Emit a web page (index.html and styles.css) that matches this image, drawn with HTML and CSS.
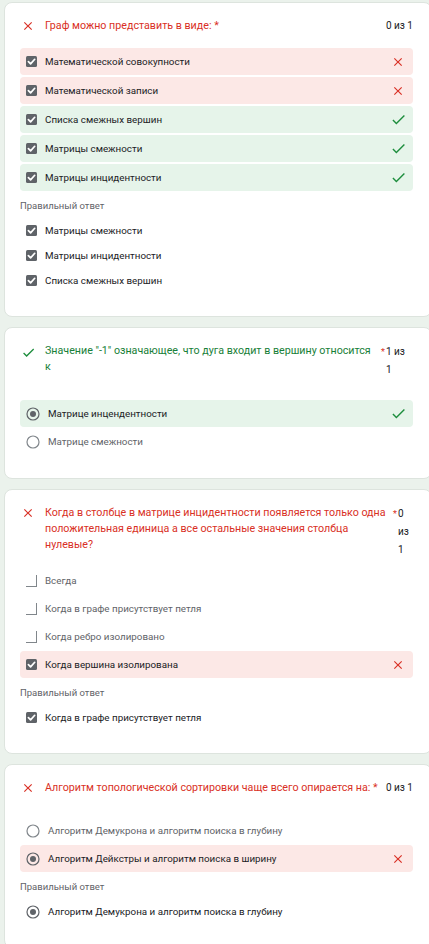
FILE: index.html
```html
<!DOCTYPE html>
<html lang="ru">
<head>
<meta charset="utf-8">
<title>Результаты теста</title>
<link rel="stylesheet" href="styles.css">
</head>
<body>
<div class="page">

  <section class="card">
    <div class="q-head">
      <svg class="q-icon q-icon--wrong" viewBox="0 0 24 24"><path d="M19 6.41L17.59 5 12 10.59 6.41 5 5 6.41 10.59 12 5 17.59 6.41 19 12 13.41 17.59 19 19 17.59 13.41 12z"/></svg>
      <div class="q-title q-title--wrong">Граф можно представить в виде: *</div>
      <div class="q-score">0 из 1</div>
    </div>
    <div class="opts opts--loose">
      <div class="opt opt--wrong">
        <svg class="cb" viewBox="0 0 11 11"><rect width="11" height="11" rx="1.5"/><polyline points="2.4,5.7 4.6,7.9 8.7,3.3"/></svg>
        <span class="opt-label">Математической совокупности</span>
        <svg class="mark mark--x" viewBox="0 0 24 24"><path d="M19 6.41L17.59 5 12 10.59 6.41 5 5 6.41 10.59 12 5 17.59 6.41 19 12 13.41 17.59 19 19 17.59 13.41 12z"/></svg>
      </div>
      <div class="opt opt--wrong">
        <svg class="cb" viewBox="0 0 11 11"><rect width="11" height="11" rx="1.5"/><polyline points="2.4,5.7 4.6,7.9 8.7,3.3"/></svg>
        <span class="opt-label">Математической записи</span>
        <svg class="mark mark--x" viewBox="0 0 24 24"><path d="M19 6.41L17.59 5 12 10.59 6.41 5 5 6.41 10.59 12 5 17.59 6.41 19 12 13.41 17.59 19 19 17.59 13.41 12z"/></svg>
      </div>
      <div class="opt opt--right">
        <svg class="cb" viewBox="0 0 11 11"><rect width="11" height="11" rx="1.5"/><polyline points="2.4,5.7 4.6,7.9 8.7,3.3"/></svg>
        <span class="opt-label">Списка смежных вершин</span>
        <svg class="mark mark--ok" viewBox="0 0 24 24"><path d="M9 16.17L4.83 12l-1.42 1.41L9 19 21 7l-1.41-1.41z"/></svg>
      </div>
      <div class="opt opt--right">
        <svg class="cb" viewBox="0 0 11 11"><rect width="11" height="11" rx="1.5"/><polyline points="2.4,5.7 4.6,7.9 8.7,3.3"/></svg>
        <span class="opt-label">Матрицы смежности</span>
        <svg class="mark mark--ok" viewBox="0 0 24 24"><path d="M9 16.17L4.83 12l-1.42 1.41L9 19 21 7l-1.41-1.41z"/></svg>
      </div>
      <div class="opt opt--right">
        <svg class="cb" viewBox="0 0 11 11"><rect width="11" height="11" rx="1.5"/><polyline points="2.4,5.7 4.6,7.9 8.7,3.3"/></svg>
        <span class="opt-label">Матрицы инцидентности</span>
        <svg class="mark mark--ok" viewBox="0 0 24 24"><path d="M9 16.17L4.83 12l-1.42 1.41L9 19 21 7l-1.41-1.41z"/></svg>
      </div>
    </div>
    <div class="correct-label">Правильный ответ</div>
    <div class="answers">
      <div class="ans">
        <svg class="cb" viewBox="0 0 11 11"><rect width="11" height="11" rx="1.5"/><polyline points="2.4,5.7 4.6,7.9 8.7,3.3"/></svg>
        <span>Матрицы смежности</span>
      </div>
      <div class="ans">
        <svg class="cb" viewBox="0 0 11 11"><rect width="11" height="11" rx="1.5"/><polyline points="2.4,5.7 4.6,7.9 8.7,3.3"/></svg>
        <span>Матрицы инцидентности</span>
      </div>
      <div class="ans">
        <svg class="cb" viewBox="0 0 11 11"><rect width="11" height="11" rx="1.5"/><polyline points="2.4,5.7 4.6,7.9 8.7,3.3"/></svg>
        <span>Списка смежных вершин</span>
      </div>
    </div>
  </section>

  <section class="card">
    <div class="q-head">
      <svg class="q-icon q-icon--ok" viewBox="0 0 24 24"><path d="M9 16.17L4.83 12l-1.42 1.41L9 19 21 7l-1.41-1.41z"/></svg>
      <div class="q-title q-title--ok">Значение "-1" означающее, что дуга входит в вершину относится к</div>
      <div class="q-score q-score--mid"><span class="req">*</span><span class="score-val">1 из 1</span></div>
    </div>
    <div class="opts opts--radio">
      <div class="opt opt--right">
        <svg class="rb" viewBox="0 0 14 14"><circle cx="7" cy="7" r="6" class="rb-ring"/><circle cx="7" cy="7" r="3" class="rb-dot"/></svg>
        <span class="opt-label">Матрице инцендентности</span>
        <svg class="mark mark--ok" viewBox="0 0 24 24"><path d="M9 16.17L4.83 12l-1.42 1.41L9 19 21 7l-1.41-1.41z"/></svg>
      </div>
      <div class="opt">
        <svg class="rb rb--off" viewBox="0 0 14 14"><circle cx="7" cy="7" r="6" class="rb-ring"/></svg>
        <span class="opt-label">Матрице смежности</span>
      </div>
    </div>
  </section>

  <section class="card">
    <div class="q-head">
      <svg class="q-icon q-icon--wrong" viewBox="0 0 24 24"><path d="M19 6.41L17.59 5 12 10.59 6.41 5 5 6.41 10.59 12 5 17.59 6.41 19 12 13.41 17.59 19 19 17.59 13.41 12z"/></svg>
      <div class="q-title q-title--wrong">Когда в столбце в матрице инцидентности появляется только одна положительная единица а все остальные значения столбца нулевые?</div>
      <div class="q-score q-score--narrow"><span class="req">*</span><span class="score-val">0 из 1</span></div>
    </div>
    <div class="opts">
      <div class="opt">
        <span class="cb-off"></span>
        <span class="opt-label">Всегда</span>
      </div>
      <div class="opt">
        <span class="cb-off"></span>
        <span class="opt-label">Когда в графе присутствует петля</span>
      </div>
      <div class="opt">
        <span class="cb-off"></span>
        <span class="opt-label">Когда ребро изолировано</span>
      </div>
      <div class="opt opt--wrong">
        <svg class="cb" viewBox="0 0 11 11"><rect width="11" height="11" rx="1.5"/><polyline points="2.4,5.7 4.6,7.9 8.7,3.3"/></svg>
        <span class="opt-label">Когда вершина изолирована</span>
        <svg class="mark mark--x" viewBox="0 0 24 24"><path d="M19 6.41L17.59 5 12 10.59 6.41 5 5 6.41 10.59 12 5 17.59 6.41 19 12 13.41 17.59 19 19 17.59 13.41 12z"/></svg>
      </div>
    </div>
    <div class="correct-label">Правильный ответ</div>
    <div class="answers">
      <div class="ans">
        <svg class="cb" viewBox="0 0 11 11"><rect width="11" height="11" rx="1.5"/><polyline points="2.4,5.7 4.6,7.9 8.7,3.3"/></svg>
        <span>Когда в графе присутствует петля</span>
      </div>
    </div>
  </section>

  <section class="card">
    <div class="q-head">
      <svg class="q-icon q-icon--wrong" viewBox="0 0 24 24"><path d="M19 6.41L17.59 5 12 10.59 6.41 5 5 6.41 10.59 12 5 17.59 6.41 19 12 13.41 17.59 19 19 17.59 13.41 12z"/></svg>
      <div class="q-title q-title--wrong">Алгоритм топологической сортировки чаще всего опирается на: *</div>
      <div class="q-score q-score--tight">0 из 1</div>
    </div>
    <div class="opts opts--radio">
      <div class="opt">
        <svg class="rb rb--off" viewBox="0 0 14 14"><circle cx="7" cy="7" r="6" class="rb-ring"/></svg>
        <span class="opt-label">Алгоритм Демукрона и алгоритм поиска в глубину</span>
      </div>
      <div class="opt opt--wrong">
        <svg class="rb" viewBox="0 0 14 14"><circle cx="7" cy="7" r="6" class="rb-ring"/><circle cx="7" cy="7" r="3" class="rb-dot"/></svg>
        <span class="opt-label">Алгоритм Дейкстры и алгоритм поиска в ширину</span>
        <svg class="mark mark--x" viewBox="0 0 24 24"><path d="M19 6.41L17.59 5 12 10.59 6.41 5 5 6.41 10.59 12 5 17.59 6.41 19 12 13.41 17.59 19 19 17.59 13.41 12z"/></svg>
      </div>
    </div>
    <div class="correct-label">Правильный ответ</div>
    <div class="answers">
      <div class="ans">
        <svg class="rb" viewBox="0 0 14 14"><circle cx="7" cy="7" r="6" class="rb-ring"/><circle cx="7" cy="7" r="3" class="rb-dot"/></svg>
        <span>Алгоритм Демукрона и алгоритм поиска в глубину</span>
      </div>
    </div>
  </section>

</div>
</body>
</html>
```
FILE: styles.css
```css
* { box-sizing: border-box; }

body {
  margin: 0;
  background: #ebf2ec;
  font-family: Roboto, "Noto Sans", Arial, sans-serif;
  color: #202124;
  overflow: hidden;
}

.page {
  display: flex;
  flex-direction: column;
  gap: 10px;
  padding: 2px 0 0 4px;
}

.card {
  background: #fff;
  border: 1px solid #dde4de;
  border-radius: 8px;
  margin-right: -3px;
  padding: 15px 18px 23px 15px;
}

.q-head {
  display: flex;
  align-items: flex-start;
}

.q-icon {
  flex: none;
  width: 14px;
  height: 14px;
  margin: 1px 10px 0 1px;
}
.q-icon--wrong { fill: #d93025; }
.q-icon--ok { fill: #1e8e3e; width: 15px; height: 15px; margin: 2px 9px 0 1px; }

.q-title {
  flex: 1;
  font-size: 10.7px;
  line-height: 16px;
}
.q-title--wrong { color: #d93025; }
.q-title--ok { color: #188038; }

.q-score {
  flex: none;
  margin-left: 10px;
  font-size: 10px;
  line-height: 16px;
  color: #202124;
  white-space: nowrap;
}

.q-score--tight { margin-left: 5px; }

.q-score--mid,
.q-score--narrow {
  display: flex;
  white-space: normal;
  line-height: 18px;
}

.q-score--mid {
  margin-right: 8px;
}
.q-score--mid .score-val { width: 19px; }

.q-score--narrow {
  margin-left: 3px;
  margin-right: 8px;
  margin-bottom: -6px;
}
.q-score--narrow .score-val { width: 7px; }

.req {
  flex: none;
  color: #d93025;
  font-size: 9px;
  margin-right: 1px;
}

.opts {
  display: flex;
  flex-direction: column;
  gap: 1px;
  margin-top: 14px;
}
.opts--loose { gap: 2px; }
.opts--radio { margin-top: 21px; }

.opt {
  display: flex;
  align-items: center;
  gap: 8px;
  height: 27px;
  padding: 0 8px 0 6px;
  border-radius: 4px;
  font-size: 9.8px;
  color: #5f6368;
}
.opt--wrong { background: #fce8e6; color: #202124; }
.opt--right { background: #e6f4ea; color: #202124; }

.opt-label { flex: 1; }

.cb {
  flex: none;
  width: 11px;
  height: 11px;
}
.cb rect { fill: #5f6368; }
.cb polyline {
  fill: none;
  stroke: #fff;
  stroke-width: 1.7;
  stroke-linecap: round;
  stroke-linejoin: round;
}

.cb-off {
  flex: none;
  width: 11px;
  height: 12px;
  border-right: 1.5px solid #80868b;
  border-bottom: 1.5px solid #80868b;
}

.rb {
  flex: none;
  width: 14px;
  height: 14px;
}
.rb-ring { fill: none; stroke: #5f6368; stroke-width: 1.2; }
.rb-dot { fill: #5f6368; }
.rb--off .rb-ring { stroke: #80868b; }

.mark {
  flex: none;
  width: 14px;
  height: 14px;
}
.mark--x { fill: #d93025; }
.mark--ok { fill: #1e8e3e; width: 17px; height: 17px; margin-right: -2px; }

.correct-label {
  margin-top: 8px;
  font-size: 9.5px;
  line-height: 14px;
  color: #5f6368;
}

.answers {
  display: flex;
  flex-direction: column;
  margin-top: 5px;
}

.ans {
  display: flex;
  align-items: center;
  gap: 8px;
  height: 25px;
  padding-left: 6px;
  font-size: 9.8px;
  color: #202124;
}
```
